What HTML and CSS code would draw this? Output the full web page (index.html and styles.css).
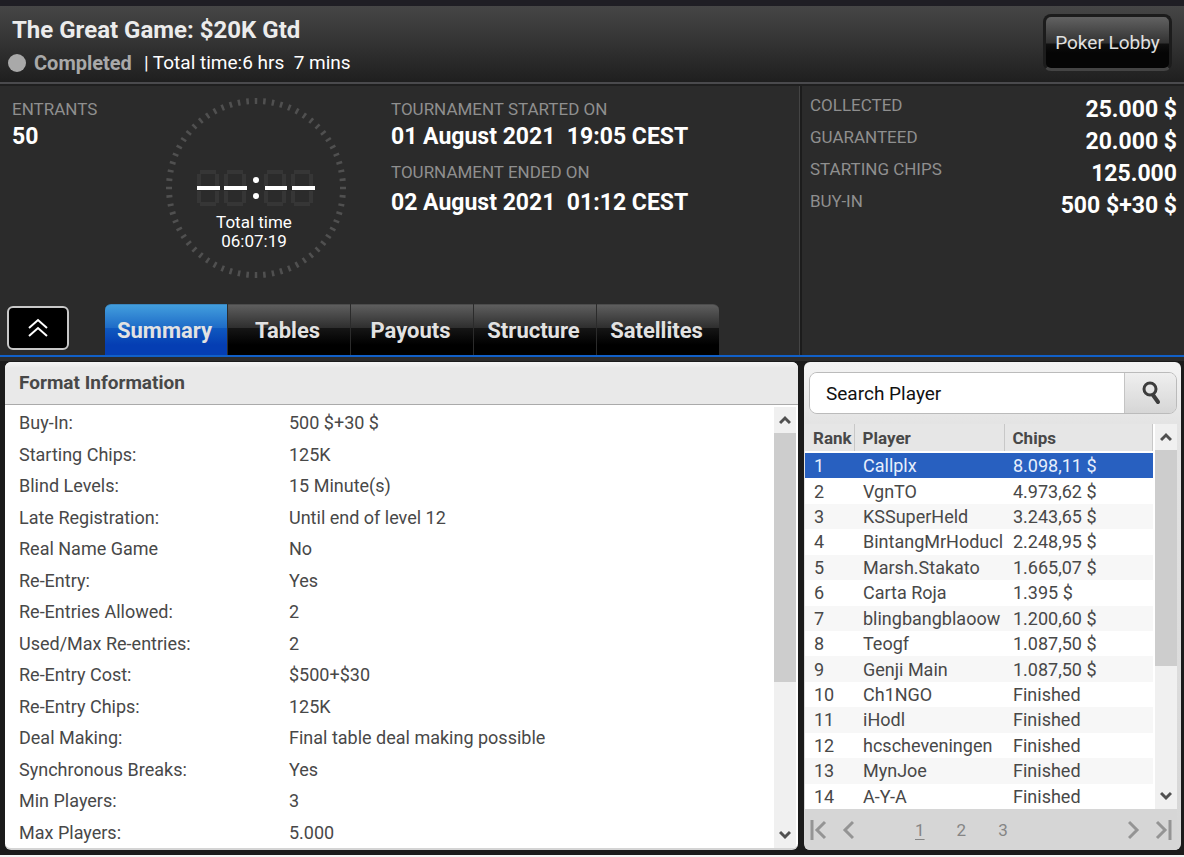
FILE: index.html
```html
<!DOCTYPE html>
<html lang="en">
<head>
    <meta charset="UTF-8">
    <meta name="viewport" content="width=device-width, initial-scale=1.0">
    <title>The Great Game: $20K Gtd</title>
    <link rel="stylesheet" href="styles.css">
</head>
<body>
    <header class="top-bar">
        <div>
            <h1>The Great Game: $20K Gtd</h1>
            <p class="status"><span class="dot"></span><b>Completed</b><span>| Total time:6 hrs&nbsp; 7 mins</span></p>
        </div>
        <button type="button" class="lobby-button">Poker Lobby</button>
    </header>

    <section class="overview">
        <div class="overview-main">
            <div class="facts">
                <dl class="entrants">
                    <dt>ENTRANTS</dt>
                    <dd>50</dd>
                </dl>
                <div class="clock">
                    <svg class="clock-face" viewBox="0 0 180 182" aria-hidden="true">
                        <circle cx="90" cy="91" r="87" fill="none" stroke="#505050" stroke-width="6" pathLength="64" stroke-dasharray="0.3 0.7" stroke-dashoffset="0.15"/>
                        <g fill="none" stroke="#363636" stroke-width="4">
                            <path id="digit" d="M34 75h16M34 107h16M33 77v12M51 77v12M33 94v12M51 94v12"/>
                            <use href="#digit" x="27"/>
                            <use href="#digit" x="67"/>
                            <use href="#digit" x="94"/>
                        </g>
                        <path d="M31 91h23M58 91h23M99 91h22M126 91h23" stroke="#fff" stroke-width="4"/>
                        <circle cx="90" cy="83" r="3" fill="#fff"/>
                        <circle cx="90" cy="99" r="3" fill="#fff"/>
                    </svg>
                    <p class="clock-text">Total time<br>06:07:19</p>
                </div>
                <dl class="dates">
                    <dt>TOURNAMENT STARTED ON</dt>
                    <dd>01 August 2021&nbsp; 19:05 CEST</dd>
                    <dt>TOURNAMENT ENDED ON</dt>
                    <dd class="last">02 August 2021&nbsp; 01:12 CEST</dd>
                </dl>
            </div>
            <div class="tab-row">
                <button type="button" class="collapse-button" aria-label="Collapse">
                    <svg width="22" height="20" viewBox="0 0 22 20" fill="none" stroke="#fff" stroke-width="2"><path d="M2 10l9-8 9 8M2 18l9-8 9 8"/></svg>
                </button>
                <nav class="tabs">
                    <button type="button" class="tab active">Summary</button>
                    <button type="button" class="tab">Tables</button>
                    <button type="button" class="tab">Payouts</button>
                    <button type="button" class="tab">Structure</button>
                    <button type="button" class="tab">Satellites</button>
                </nav>
            </div>
        </div>
        <dl class="prizes">
            <div><dt>COLLECTED</dt><dd>25.000 $</dd></div>
            <div><dt>GUARANTEED</dt><dd>20.000 $</dd></div>
            <div><dt>STARTING CHIPS</dt><dd>125.000</dd></div>
            <div><dt>BUY-IN</dt><dd>500 $+30 $</dd></div>
        </dl>
    </section>

    <main class="panels">
        <section class="panel format">
            <h2>Format Information</h2>
            <div class="format-body">
                <dl class="format-list">
                    <div><dt>Buy-In:</dt><dd>500 $+30 $</dd></div>
                    <div><dt>Starting Chips:</dt><dd>125K</dd></div>
                    <div><dt>Blind Levels:</dt><dd>15 Minute(s)</dd></div>
                    <div><dt>Late Registration:</dt><dd>Until end of level 12</dd></div>
                    <div><dt>Real Name Game</dt><dd>No</dd></div>
                    <div><dt>Re-Entry:</dt><dd>Yes</dd></div>
                    <div><dt>Re-Entries Allowed:</dt><dd>2</dd></div>
                    <div><dt>Used/Max Re-entries:</dt><dd>2</dd></div>
                    <div><dt>Re-Entry Cost:</dt><dd>$500+$30</dd></div>
                    <div><dt>Re-Entry Chips:</dt><dd>125K</dd></div>
                    <div><dt>Deal Making:</dt><dd>Final table deal making possible</dd></div>
                    <div><dt>Synchronous Breaks:</dt><dd>Yes</dd></div>
                    <div><dt>Min Players:</dt><dd>3</dd></div>
                    <div><dt>Max Players:</dt><dd>5.000</dd></div>
                </dl>
                <div class="scrollbar">
                    <svg class="arrow" viewBox="0 0 12 8"><path d="M1 7l5-5 5 5"/></svg>
                    <div class="track"><div class="thumb"></div></div>
                    <svg class="arrow" viewBox="0 0 12 8"><path d="M1 1l5 5 5-5"/></svg>
                </div>
            </div>
        </section>

        <section class="panel players">
            <form class="search">
                <input type="text" aria-label="Search Player" placeholder="Search Player">
                <button type="button" aria-label="Search">
                    <svg width="20" height="24" viewBox="0 0 20 24" fill="none" stroke="#3c3c3c"><circle cx="9" cy="8" r="6" stroke-width="3"/><path d="M12 14l5 7" stroke-width="4" stroke-linecap="round"/></svg>
                </button>
            </form>
            <div class="players-body">
                <table>
                    <thead>
                        <tr><th class="rank">Rank</th><th class="name">Player</th><th>Chips</th></tr>
                    </thead>
                    <tbody>
                        <tr class="selected"><td>1</td><td>Callplx</td><td>8.098,11 $</td></tr>
                        <tr><td>2</td><td>VgnTO</td><td>4.973,62 $</td></tr>
                        <tr><td>3</td><td>KSSuperHeld</td><td>3.243,65 $</td></tr>
                        <tr><td>4</td><td>BintangMrHoducl</td><td>2.248,95 $</td></tr>
                        <tr><td>5</td><td>Marsh.Stakato</td><td>1.665,07 $</td></tr>
                        <tr><td>6</td><td>Carta Roja</td><td>1.395 $</td></tr>
                        <tr><td>7</td><td>blingbangblaoow</td><td>1.200,60 $</td></tr>
                        <tr><td>8</td><td>Teogf</td><td>1.087,50 $</td></tr>
                        <tr><td>9</td><td>Genji Main</td><td>1.087,50 $</td></tr>
                        <tr><td>10</td><td>Ch1NGO</td><td>Finished</td></tr>
                        <tr><td>11</td><td>iHodl</td><td>Finished</td></tr>
                        <tr><td>12</td><td>hcscheveningen</td><td>Finished</td></tr>
                        <tr><td>13</td><td>MynJoe</td><td>Finished</td></tr>
                        <tr><td>14</td><td>A-Y-A</td><td>Finished</td></tr>
                    </tbody>
                </table>
                <div class="scrollbar">
                    <svg class="arrow" viewBox="0 0 12 8"><path d="M1 7l5-5 5 5"/></svg>
                    <div class="track"><div class="thumb"></div></div>
                    <svg class="arrow" viewBox="0 0 12 8"><path d="M1 1l5 5 5-5"/></svg>
                </div>
            </div>
            <nav class="pager">
                <button type="button" aria-label="First page"><svg width="18" height="20" viewBox="0 0 18 20"><path d="M3 0v20M16 2l-8 8 8 8"/></svg></button>
                <button type="button" aria-label="Previous page"><svg width="12" height="20" viewBox="0 0 12 20"><path d="M11 2l-8 8 8 8"/></svg></button>
                <div class="pages">
                    <a href="#" class="current">1</a>
                    <a href="#">2</a>
                    <a href="#">3</a>
                </div>
                <button type="button" aria-label="Next page"><svg width="12" height="20" viewBox="0 0 12 20"><path d="M1 2l8 8-8 8"/></svg></button>
                <button type="button" aria-label="Last page"><svg width="18" height="20" viewBox="0 0 18 20"><path d="M15 0v20M2 2l8 8-8 8"/></svg></button>
            </nav>
        </section>
    </main>
</body>
</html>
```
FILE: styles.css
```css
* {
    box-sizing: border-box;
}
body {
    display: flex;
    flex-direction: column;
    min-height: 100vh;
    margin: 0;
    border-top: 6px solid #1f1e24;
    border-bottom: 2px solid #f4f4f4;
    background-color: #1b1b1b;
    color: #fff;
    font-family: Roboto, Arial, sans-serif;
    font-size: 18px;
}
h1, h2, p, dl, dd {
    margin: 0;
}
button {
    padding: 0;
    border: none;
    background: none;
    color: inherit;
    font: inherit;
    cursor: pointer;
}

/* Header */
.top-bar {
    display: flex;
    justify-content: space-between;
    align-items: flex-start;
    height: 80px;
    padding: 8px 12px 0;
    background: linear-gradient(#464646, #1f1f1f 76px, #4a4a4d 76px, #4a4a4d 78px, #1f1f1f 78px);
}
h1 {
    font-size: 24px;
    line-height: 33px;
    color: #ececec;
}
.status {
    display: flex;
    align-items: center;
    font-size: 19px;
    line-height: 32px;
}
.status b {
    margin-right: 12px;
    font-size: 20px;
    color: #a9a9a9;
}
.dot {
    width: 18px;
    height: 18px;
    margin: 0 8px 0 -4px;
    border-radius: 50%;
    background-color: #a9a9a9;
}
.lobby-button {
    width: 129px;
    height: 57px;
    border: 3px solid #1c1c1c;
    border-bottom-color: #444;
    border-radius: 8px;
    background: linear-gradient(#626262, #333 50%, #0f0f0f 54%, #050505 70%);
    font-size: 19px;
    color: #e0e0e0;
}

/* Tournament overview */
.overview {
    display: flex;
    height: 271px;
    background-color: #2b2b2b;
    border-bottom: 2px solid #1160c8;
}
.overview-main {
    display: flex;
    flex: 1;
    flex-direction: column;
    justify-content: space-between;
}
.facts {
    display: flex;
    padding: 11px 12px 0;
}
.facts dt, .prizes dt {
    font-size: 17px;
    line-height: 24px;
    color: #8f8f8f;
}
.facts dd, .prizes dd {
    font-size: 23px;
    font-weight: bold;
    line-height: 31px;
}
.entrants {
    width: 154px;
}
.clock {
    position: relative;
    width: 180px;
    margin-right: 45px;
}
.clock-face {
    display: block;
    width: 180px;
    height: 182px;
}
.clock-text {
    position: absolute;
    top: 116px;
    left: 0;
    width: 176px;
    font-size: 17px;
    line-height: 19px;
    text-align: center;
}
.dates dd {
    padding-bottom: 8px;
}
.dates .last {
    padding-top: 3px;
}
.tab-row {
    display: flex;
    align-items: flex-end;
    gap: 36px;
    padding-left: 7px;
}
.collapse-button {
    display: flex;
    align-items: center;
    justify-content: center;
    width: 62px;
    height: 44px;
    margin-bottom: 5px;
    border: 2px solid #c8c8c8;
    border-radius: 6px;
    background-color: #000;
}
.tabs {
    display: flex;
    gap: 1px;
}
.tab {
    width: 122px;
    height: 51px;
    padding-right: 3px;
    border-top: 1px solid #4c4c4c;
    background: linear-gradient(#5e5e5e, #2f2f2f 45%, #151515 47%, #000 80%);
    font-size: 22px;
    font-weight: bold;
    color: #e2e2e2;
}
.tab:first-child {
    border-top-left-radius: 6px;
}
.tab:last-child {
    border-top-right-radius: 6px;
}
.tab.active {
    border-color: #3a86bf;
    background: linear-gradient(#429edd, #1f6cc8 45%, #0f58bf 47%, #053eb3 80%);
}
.prizes {
    width: 384px;
    padding: 7px 7px 0 8px;
    border-left: 2px solid #1c1c1c;
    box-shadow: -1px 0 #444;
}
.prizes div {
    display: flex;
    justify-content: space-between;
}
.prizes dd {
    padding-top: 1px;
}

/* Panels */
.panels {
    display: flex;
    flex: 1;
    gap: 6px;
    padding: 1px 3px 5px 5px;
    border-top: 4px solid #2b2b2b;
}
.panel {
    display: flex;
    flex-direction: column;
    overflow: hidden;
    border-radius: 6px;
    color: #484848;
}
.format {
    flex: 1;
    border-bottom: 2px solid #d4d4d4;
    background-color: #fff;
}
.format h2 {
    padding: 0 14px;
    border-bottom: 1px solid #aaa;
    background: linear-gradient(#f6f6f6, #e9e9e9 6px);
    font-size: 19px;
    line-height: 42px;
}
.format-body {
    display: flex;
    flex: 1;
    padding: 2px 2px 0 14px;
}
.format-list {
    display: flex;
    flex: 1;
    flex-direction: column;
}
.format-list div {
    display: flex;
    flex: 1;
    align-items: center;
}
.format-list dt {
    width: 270px;
}

/* Scrollbars */
.scrollbar {
    display: flex;
    flex-direction: column;
    align-items: center;
    width: 22px;
    background-color: #f0f0f0;
}
.arrow {
    width: 12px;
    height: 26px;
    fill: none;
    stroke: #505050;
    stroke-width: 3;
}
.track {
    flex: 1;
    width: 100%;
}
.thumb {
    height: 64%;
    background-color: #cdcdcd;
}

/* Player list */
.players {
    width: 377px;
    padding: 0 4px 0 1px;
    background: linear-gradient(#f4f4f4, #e4e4e4 60px, #d6d6d6);
}
.search {
    display: flex;
    height: 42px;
    margin: 10px 0 10px 4px;
    border: 1px solid #bbb;
    border-radius: 8px;
    overflow: hidden;
}
.search input {
    flex: 1;
    min-width: 0;
    padding: 0 16px;
    border: none;
    background-color: #fff;
    font: 19px Roboto, Arial, sans-serif;
}
.search input::placeholder {
    color: #111;
}
.search button {
    width: 52px;
    border-left: 1px solid #c4c4c4;
    background: linear-gradient(#efefef, #d6d6d6);
}
.search svg {
    display: block;
    margin: auto;
}
.players-body {
    display: flex;
    flex: 1;
    gap: 2px;
    background-color: #fff;
}
.players table {
    flex: 1;
    width: 100%;
    height: 100%;
    table-layout: fixed;
    border-collapse: collapse;
}
.players-body .scrollbar {
    flex: none;
}
.players-body .thumb {
    height: 65%;
}
.players th {
    height: 28px;
    padding: 0 0 0 8px;
    border-right: 1px solid #c8c8c8;
    border-bottom: 2px solid #fff;
    background-color: #e6e6e6;
    font-size: 17px;
    text-align: left;
}
.players .rank {
    width: 49px;
}
.players .name {
    width: 150px;
}
.players td {
    padding: 0 0 0 9px;
    line-height: 25px;
    white-space: nowrap;
}
.players tbody tr:nth-child(odd) {
    background-color: #f7f7f7;
}
.players tbody .selected {
    background-color: #2860c0 !important;
    color: #e6eefc;
}
.pager {
    display: flex;
    align-items: center;
    gap: 15px;
    height: 41px;
    padding: 0 4px;
    background-color: #d6d6d6;
    color: #858585;
}
.pager svg {
    display: block;
    fill: none;
    stroke: #949494;
    stroke-width: 3;
}
.pages {
    display: flex;
    flex: 1;
    gap: 32px;
    padding-left: 46px;
    font-size: 17px;
}
.pages a {
    color: inherit;
    text-decoration: none;
}
.pages .current {
    text-decoration: underline;
    text-underline-offset: 3px;
}
```
